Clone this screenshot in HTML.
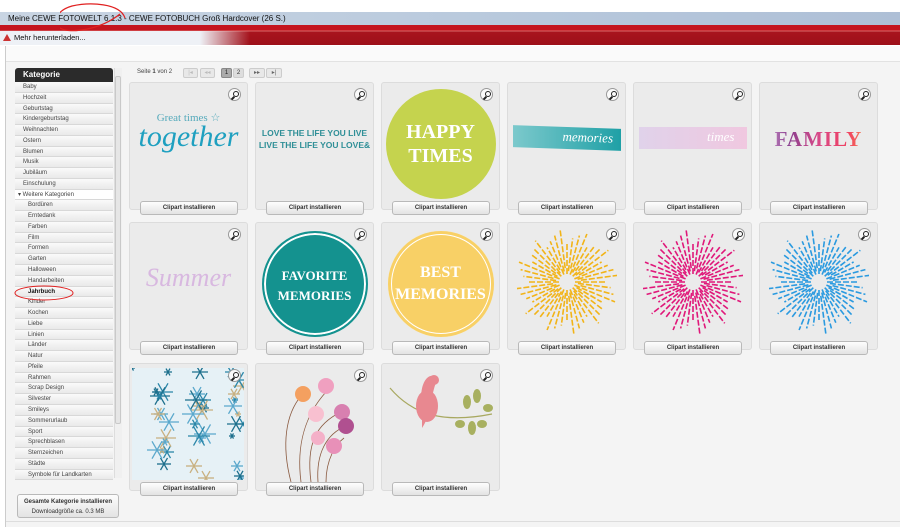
<!DOCTYPE html>
<html><head><meta charset="utf-8"><style>
*{margin:0;padding:0;box-sizing:border-box}
body{width:900px;height:527px;overflow:hidden;background:#fff;font-family:"Liberation Sans",sans-serif;position:relative}
.a{position:absolute}
.title{left:0;top:12px;width:900px;height:13px;background:linear-gradient(90deg,#c9d5e3,#b7c8dc 60%,#aebfd6);font-size:8px;line-height:13px;padding-left:8px;color:#111}
.red{left:0;top:25px;width:900px;height:20px;background:linear-gradient(180deg,#c4141e 0,#c4141e 5px,#d96a6a 6px,#a8141e 7px,#9d1019 100%)}
.sub{left:0;top:31px;width:250px;height:14px;background:linear-gradient(90deg,#eef1f6 80%,rgba(238,241,246,0));font-size:7.5px;line-height:14px;padding-left:14px;color:#111}
.win{left:5px;top:46px;width:895px;height:481px;background:#f4f4f4;border-left:1px solid #ccc}
.top{left:6px;top:46px;width:894px;height:16px;background:#fafafa;border-bottom:1px solid #e2e2e2}
.side{left:15px;top:68px;width:98px}
.kat{height:14px;background:#2b2b2b;color:#fff;font-weight:bold;font-size:8px;line-height:14px;padding-left:8px;border-radius:3px 3px 0 0}
.it{height:10.78px;font-size:6px;line-height:10.78px;color:#444;background:linear-gradient(#fafafa,#e9e9e9);border-bottom:1px solid #d8d8d8;padding-left:8px;white-space:nowrap;overflow:hidden}
.it.s{padding-left:13px}
.card{width:119px;height:128px;background:#ebebeb;border:1px solid #dcdcdc;border-radius:3px}
.btn{width:98px;height:14px;border:1px solid #b9b9b9;border-radius:3px;background:linear-gradient(#fdfdfd,#e3e3e3);font-size:6px;font-weight:bold;color:#333;text-align:center;line-height:12px}
.mag{width:13px;height:13px;border:1px solid #999;border-radius:50%;background:#fafafa}
.mag:after{content:"";position:absolute;left:4px;top:2px;width:4px;height:4px;border:1.3px solid #222;border-radius:50%}
.mag:before{content:"";position:absolute;left:3px;top:7px;width:1.5px;height:4px;background:#222;transform:rotate(45deg)}
.pg{height:10px;border:1px solid #ccc;background:#e8e8e8;font-size:6px;line-height:8px;text-align:center;color:#bbb;border-radius:2px}
</style></head><body>
<div class="a title">Meine CEWE FOTOWELT 6.1.3 - CEWE FOTOBUCH Groß Hardcover (26 S.)</div>
<div class="a red"></div>
<div class="a sub">Mehr herunterladen...</div>
<div class="a" style="left:3px;top:34px;width:8px;height:7px;background:#c33;clip-path:polygon(50% 0,100% 100%,0 100%)"></div>
<div class="a win"></div>
<div class="a top"></div>
<svg class="a" style="left:60px;top:0" width="70" height="40"><path d="M95 18 C90 3 60 2 42 6 C28 10 22 20 30 28 C40 34 70 30 90 14" transform="translate(-30,0)" fill="none" stroke="#e02020" stroke-width="1.2"/></svg>

<div class="a side">
<div class="kat">Kategorie</div>
<div id="list"></div>
</div>
<div class="a" style="left:114px;top:68px;width:8px;height:410px;background:#f0f0f0;border-left:1px solid #ddd"></div>
<div class="a" style="left:115px;top:76px;width:6px;height:348px;background:#e6e6e6;border:1px solid #c9c9c9;border-radius:2px"></div>
<svg class="a" style="left:14px;top:283px" width="62" height="20"><ellipse cx="30" cy="10" rx="29" ry="7" fill="none" stroke="#e02020" stroke-width="1"/></svg>
<div class="a btn" style="left:17px;top:494px;width:102px;height:24px;line-height:10px;padding-top:2px;font-size:6px">Gesamte Kategorie installieren<br><span style="font-weight:normal">Downloadgröße ca. 0.3 MB</span></div>

<div class="a" style="left:137px;top:69px;font-size:6px;color:#444">Seite <b>1</b> von 2</div>
<div class="a pg" style="left:183px;top:68px;width:15px">|◂</div>
<div class="a pg" style="left:200px;top:68px;width:15px">◂◂</div>
<div class="a pg" style="left:221px;top:68px;width:11px;background:#aaa;color:#222;border-color:#888">1</div>
<div class="a pg" style="left:233px;top:68px;width:11px;background:#ddd;color:#333">2</div>
<div class="a pg" style="left:249px;top:68px;width:16px;color:#666">▸▸</div>
<div class="a pg" style="left:266px;top:68px;width:16px;color:#666">▸|</div>

<div id="cards"></div>
<div class="a" style="left:6px;top:521px;width:894px;height:1px;background:#ddd"></div>

<script>
var L=["Baby","Hochzeit","Geburtstag","Kindergeburtstag","Weihnachten","Ostern","Blumen","Musik","Jubiläum","Einschulung"];
var S=["Bordüren","Erntedank","Farben","Film","Formen","Garten","Halloween","Handarbeiten","<b style='color:#111'>Jahrbuch</b>","Kinder","Kochen","Liebe","Linien","Länder","Natur","Pfeile","Rahmen","Scrap Design","Silvester","Smileys","Sommerurlaub","Sport","Sprechblasen","Sternzeichen","Städte","Symbole für Landkarten"];
var h="";L.forEach(function(x){h+='<div class="it">'+x+'</div>'});
h+='<div class="it" style="padding-left:3px;background:#fff">▾ Weitere Kategorien</div>';
S.forEach(function(x){h+='<div class="it s">'+x+'</div>'});
document.getElementById("list").innerHTML=h;

function fw(c){var s='<svg width="100" height="110" viewBox="-50 -55 100 110">';for(var i=0;i<48;i++){var a=i*Math.PI*2/48,r1=8+(i%3)*3,r2=40+(i%4)*4;s+='<line x1="'+(Math.cos(a)*r1).toFixed(1)+'" y1="'+(Math.sin(a)*r1).toFixed(1)+'" x2="'+(Math.cos(a)*r2).toFixed(1)+'" y2="'+(Math.sin(a)*r2).toFixed(1)+'" stroke="'+c+'" stroke-width="1.6" stroke-dasharray="6 2"/>';}return s+'</svg>';}
function snow(){var s='<svg width="112" height="112">',cs=["#1d6f8c","#5aa8cc","#c8b080","#2a86a8"];s+='<rect width="112" height="112" fill="#e6f1f6"/>';for(var i=0;i<42;i++){var x=(i*37)%112,y=(i*53+i*i)%112,r=3+(i*7)%9,c=cs[i%4];for(var k=0;k<3;k++){var a=k*Math.PI/3;s+='<line x1="'+(x-Math.cos(a)*r)+'" y1="'+(y-Math.sin(a)*r)+'" x2="'+(x+Math.cos(a)*r)+'" y2="'+(y+Math.sin(a)*r)+'" stroke="'+c+'" stroke-width="1.3"/>';}}return s+'</svg>';}
var art=[
'<div style="text-align:center;color:#1fa0c0;margin-top:28px"><div style="font-size:11px;font-family:Liberation Serif;color:#5ab">Great times ☆</div><div style="font-size:30px;font-family:Liberation Serif;font-style:italic;line-height:26px">together</div></div>',
'<div style="text-align:center;color:#2f8f97;margin-top:44px;font-size:8.5px;font-weight:bold;line-height:12px">LOVE THE LIFE YOU LIVE<br>LIVE THE LIFE YOU LOVE&amp;</div>',
'<div style="margin:6px auto 0;width:110px;height:110px;border-radius:50%;background:#c5d34e;color:#fff;text-align:center;font-family:Liberation Serif;font-weight:bold;font-size:20px;line-height:24px;padding-top:31px">HAPPY<br>TIMES</div>',
'<div style="margin:44px auto 0;width:108px;height:22px;background:linear-gradient(90deg,#7cc9cc,#1fa0a6);color:#fff;font-family:Liberation Serif;font-style:italic;font-size:13px;text-align:right;padding-right:8px;line-height:20px;transform:skewY(2deg)">memories</div>',
'<div style="margin:44px auto 0;width:108px;height:22px;background:linear-gradient(90deg,#e0d2ea,#f0c8e0);color:#fff;font-family:Liberation Serif;font-style:italic;font-size:13px;text-align:right;padding-right:12px;line-height:20px">times</div>',
'<div style="margin-top:44px;text-align:center;font-family:Liberation Serif;font-weight:bold;font-size:21px;letter-spacing:1px;background:linear-gradient(90deg,#d8a8d8,#8a3f8f,#d84888,#f04060,#f8b050);-webkit-background-clip:text;color:transparent">FAMILY</div>',
'<div style="margin-top:40px;text-align:center;font-family:Liberation Serif;font-style:italic;font-size:26px;color:#d8b8e0">Summer</div>',
'<div style="margin:8px auto 0;width:106px;height:106px;border-radius:50%;background:#14928f;border:2px solid #14928f;box-shadow:inset 0 0 0 2px #fff;color:#fff;text-align:center;font-family:Liberation Serif;font-weight:bold;font-size:13px;line-height:20px;padding-top:33px">FAVORITE<br>MEMORIES</div>',
'<div style="margin:8px auto 0;width:106px;height:106px;border-radius:50%;background:#f8d066;box-shadow:inset 0 0 0 3px #f8d066,inset 0 0 0 4px #fff;color:#fff;text-align:center;font-family:Liberation Serif;font-weight:bold;font-size:16px;line-height:22px;padding-top:31px">BEST<br>MEMORIES</div>',
'<div style="margin:4px 0 0 9px">'+fw("#f2b418")+'</div>','<div style="margin:4px 0 0 9px">'+fw("#e0187a")+'</div>','<div style="margin:4px 0 0 9px">'+fw("#2a9ae0")+'</div>',
'<div style="margin:4px 0 0 2px">'+snow()+'</div>',
'<svg width="118" height="120"><g fill="none" stroke="#8a5a40" stroke-width=".8"><path d="M35 118 C25 80 30 50 45 32"/><path d="M45 118 C40 80 50 50 70 28"/><path d="M55 118 C50 80 60 60 85 48"/><path d="M62 118 C60 90 70 70 90 62"/><path d="M70 118 C70 95 80 80 88 74"/></g><circle cx="47" cy="30" r="8" fill="#f4a060"/><circle cx="70" cy="22" r="8" fill="#f0a0c0"/><circle cx="86" cy="48" r="8" fill="#d880b0"/><circle cx="90" cy="62" r="8" fill="#b05090"/><circle cx="78" cy="82" r="8" fill="#e890b8"/><circle cx="60" cy="50" r="8" fill="#f8c0d0"/><circle cx="62" cy="74" r="7" fill="#f4b0c8"/></svg>',
'<svg width="118" height="120"><path d="M8 24 C30 50 60 60 110 50" fill="none" stroke="#a8a860" stroke-width="1.2"/><path d="M40 44 C36 20 46 6 56 14 C48 30 50 50 40 64 Z" fill="#e88890"/><ellipse cx="45" cy="42" rx="11" ry="16" fill="#e88890"/><circle cx="52" cy="16" r="5" fill="#e88890"/><g fill="#a8b060"><ellipse cx="85" cy="38" rx="4" ry="7"/><ellipse cx="95" cy="32" rx="4" ry="7"/><ellipse cx="78" cy="60" rx="5" ry="4"/><ellipse cx="90" cy="64" rx="4" ry="7"/><ellipse cx="106" cy="44" rx="5" ry="4"/><ellipse cx="100" cy="60" rx="5" ry="4"/></g></svg>'];
var xs=[129,255,381,507,633,759],ys=[82,222,363],c="";
for(var i=0;i<15;i++){var x=xs[i%6],y=ys[Math.floor(i/6)];
c+='<div class="a card" style="left:'+x+'px;top:'+y+'px;overflow:hidden">'+art[i]+'</div>';
c+='<div class="a mag" style="left:'+(x+99)+'px;top:'+(y+6)+'px"></div>';
c+='<div class="a btn" style="left:'+(x+11)+'px;top:'+(y+119)+'px">Clipart installieren</div>';}
document.getElementById("cards").innerHTML=c;
</script>
</body></html>
